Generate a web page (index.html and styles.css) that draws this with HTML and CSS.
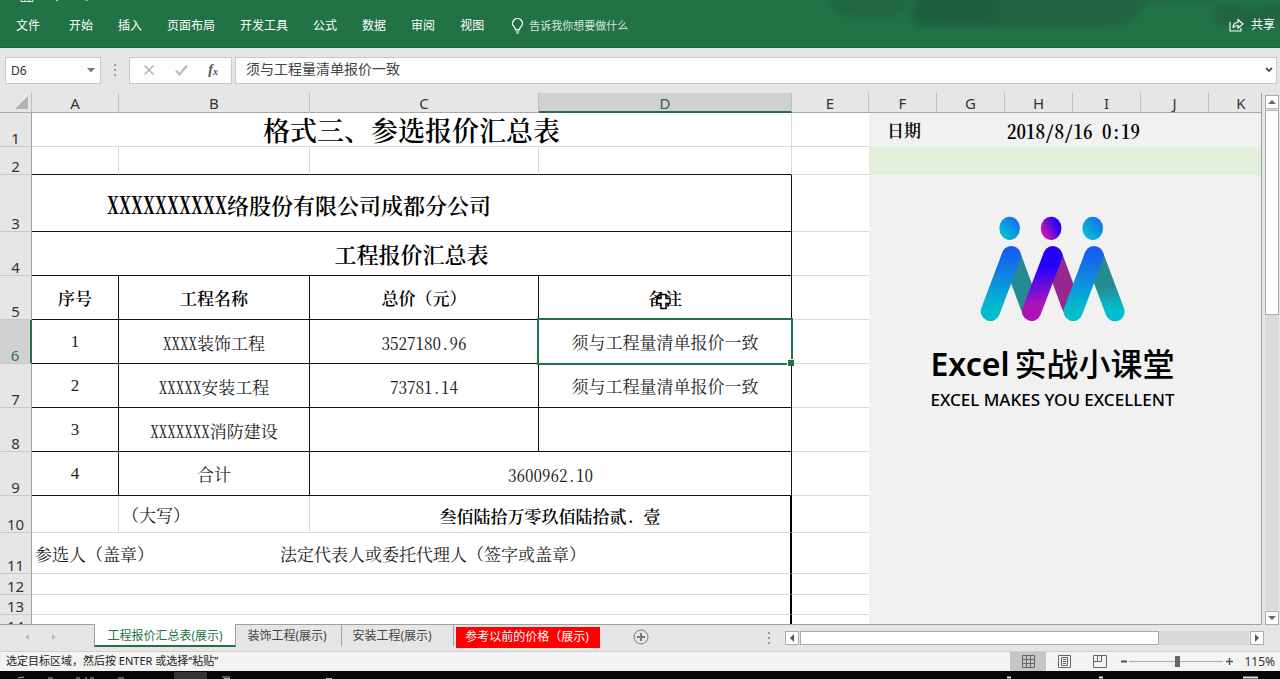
FILE: index.html
```html
<!DOCTYPE html>
<html lang="zh-CN">
<head>
<meta charset="utf-8">
<title>工程报价汇总表</title>
<link rel="stylesheet" href="styles.css">
</head>
<body>
<header class="ribbon">
  <svg class="ribbon-art" width="460" height="34" viewBox="0 0 460 34" aria-hidden="true">
    <defs><filter id="soft" x="-10%" y="-30%" width="120%" height="160%"><feGaussianBlur stdDeviation="3"/></filter></defs>
    <g fill="#1f6040" filter="url(#soft)">
      <path d="M8 -12h80v26l-24 4-50-3z" opacity=".6"/>
      <path d="M90 -12h92l-4 18 4 12-8 9H96l-6-9 4-14z"/>
      <path d="M170 -12h160l-10 26-14 12-90 2-46-2z" opacity=".75"/>
      <path d="M320 -12h80v14l-80 4z" opacity=".5"/>
      <path d="M394 8l14-6 20 8 40-10v22l-40 5-34-2z" opacity=".75"/>
    </g>
  </svg>
  <svg class="quick-access" width="70" height="3" viewBox="0 0 70 3" aria-hidden="true">
    <path d="M1 0v1.500h12V0M5 0v1M9 0v1M36 0l2 1M65 0h3" fill="none" stroke="#e6f0ea"/>
  </svg>
  <nav class="menu">
    <button class="menu-item menu-file">文件</button>
    <button class="menu-item">开始</button>
    <button class="menu-item">插入</button>
    <button class="menu-item">页面布局</button>
    <button class="menu-item">开发工具</button>
    <button class="menu-item">公式</button>
    <button class="menu-item">数据</button>
    <button class="menu-item">审阅</button>
    <button class="menu-item">视图</button>
    <button class="menu-item tell-me">
      <svg width="13" height="16" viewBox="0 0 13 16" fill="none" stroke="#fff" stroke-width="1.200"><path d="M4.500 11.500C4.500 9 1.500 8.500 1.500 5.500a5 5 0 0 1 10 0c0 3-3 3.500-3 6zM4.500 13h4M5 15h3"/></svg>
      <span>告诉我你想要做什么</span>
    </button>
  </nav>
  <button class="menu-item share">
    <svg width="15" height="14" viewBox="0 0 15 14" fill="none" stroke="#fff" stroke-width="1.100"><path d="M1 4v9h11v-3M4 10c0-4 2-5.500 5-5.500V1.500L14 6 9 10V7.500C7 7.500 5 8 4 10z"/></svg>
    <span>共享</span>
  </button>
</header>

<section class="formula-bar">
  <div class="name-box">
    <input class="name-input" aria-label="名称框" value="D6">
    <svg width="8" height="5" viewBox="0 0 8 5"><path d="M0 0h8L4 4.500z" fill="#777"/></svg>
  </div>
  <span class="grip"></span>
  <div class="formula-actions">
    <button aria-label="取消"><svg width="12" height="12" viewBox="0 0 12 12"><path d="M1.500 1.500l9 9M10.500 1.500l-9 9" stroke="#b5b5b5" stroke-width="1.500"/></svg></button>
    <button aria-label="输入"><svg width="13" height="12" viewBox="0 0 13 12"><path d="M1 6.500l3.500 4L12 1.500" fill="none" stroke="#b9b9b9" stroke-width="2"/></svg></button>
    <button class="fx" aria-label="插入函数">f<small>x</small></button>
  </div>
  <div class="formula-box">
    <input class="formula-input" aria-label="编辑栏" value="须与工程量清单报价一致">
    <svg width="8" height="6" viewBox="0 0 8 6"><path d="M1 1l3 3 3-3" fill="none" stroke="#555" stroke-width="1.800"/></svg>
  </div>
</section>

<main class="workspace">
  <div class="sheet-view">
    <table class="sheet">
      <colgroup>
        <col class="w-head"><col class="w-a"><col class="w-b"><col class="w-c"><col class="w-d"><col class="w-e">
        <col class="w-f"><col class="w-f"><col class="w-f"><col class="w-f"><col class="w-f"><col>
      </colgroup>
      <thead>
        <tr>
          <th class="corner"><svg width="13" height="13" viewBox="0 0 13 13"><path d="M13 0v13H0z" fill="#b3b3b3"/></svg></th>
          <th>A</th><th>B</th><th>C</th><th class="col-active">D</th><th>E</th>
          <th>F</th><th>G</th><th>H</th><th>I</th><th>J</th><th class="col-k">K</th>
        </tr>
      </thead>
      <tbody>
        <tr class="r1"><th>1</th><td colspan="4" class="title">格式三、参选报价汇总表</td><td class="plain"></td><td colspan="2" class="panel date-label">日期</td><td colspan="4" class="panel date"><span class="half-date">2018/8/16 0:19</span></td></tr>
        <tr class="r2"><th>2</th><td class="under"></td><td class="under"></td><td class="under"></td><td class="under"></td><td class="plain"></td><td colspan="6" class="band"></td></tr>
        <tr class="r3"><th>3</th><td colspan="4" class="box company"><span class="half-large">XXXXXXXXXX</span>络股份有限公司成都分公司</td><td class="plain"></td>
          <td colspan="6" rowspan="12" class="panel brand">
            <svg class="brand-mark" width="147" height="108" viewBox="240 45 440 325" role="img" aria-label="Excel实战小课堂">
              <defs>
                <linearGradient id="blue" gradientUnits="userSpaceOnUse" x1="0" y1="140" x2="0" y2="365"><stop offset="0" stop-color="#1658fa"/><stop offset=".25" stop-color="#1273e6"/><stop offset=".8" stop-color="#04b9cf"/><stop offset="1" stop-color="#04bfce"/></linearGradient>
                <linearGradient id="violet" gradientUnits="userSpaceOnUse" x1="440" y1="140" x2="470" y2="365"><stop offset=".25" stop-color="#2100ff"/><stop offset=".75" stop-color="#ad14b8"/></linearGradient>
                <linearGradient id="teal" gradientUnits="userSpaceOnUse" x1="0" y1="180" x2="0" y2="365"><stop offset=".2" stop-color="#248c8f"/><stop offset=".45" stop-color="#248c93"/><stop offset=".8" stop-color="#04bdce"/></linearGradient>
                <linearGradient id="headBlue" x1="1" y1="0" x2="0" y2="1"><stop offset=".1" stop-color="#146df0"/><stop offset=".8" stop-color="#07bad2"/></linearGradient>
                <linearGradient id="headViolet" x1="1" y1=".2" x2="0" y2=".8"><stop offset=".2" stop-color="#2602fa"/><stop offset=".8" stop-color="#b914b5"/></linearGradient>
              </defs>
              <g fill="none" stroke-width="58" stroke-linecap="round">
                <path d="M336 168L392 320" stroke="#248b92"/>
                <path d="M461 168L517 320" stroke="#97278f"/>
                <path d="M585 168L648 336" stroke="url(#teal)"/>
                <path d="M336 168L273 335" stroke="url(#blue)"/>
                <path d="M461 168L397 335" stroke="url(#violet)"/>
                <path d="M585 168L522 335" stroke="url(#blue)"/>
              </g>
              <ellipse cx="331" cy="85" rx="31" ry="35" fill="url(#headBlue)"/>
              <ellipse cx="456" cy="85" rx="31" ry="35" fill="url(#headViolet)"/>
              <ellipse cx="581" cy="85" rx="31" ry="35" fill="url(#headBlue)"/>
            </svg>
            <div class="brand-name"><span class="brand-latin">Excel</span><span class="brand-han">实战小课堂</span></div>
            <div class="brand-line">EXCEL MAKES YOU EXCELLENT</div>
          </td></tr>
        <tr class="r4"><th>4</th><td colspan="4" class="box subtitle">工程报价汇总表</td><td class="plain"></td></tr>
        <tr class="r5"><th>5</th><td class="box label">序号</td><td class="box label">工程名称</td><td class="box label">总价（元）</td><td class="box label"><span class="pointed">备注<svg class="pointer" width="15" height="17" viewBox="0 0 15 17"><path d="M5 1.500h5v4h4v5h-4v5H5v-5H1v-5h4z" fill="#fff" stroke="#000" stroke-width="1.500"/></svg></span></td><td class="plain"></td></tr>
        <tr class="r6"><th class="row-active">6</th><td class="box num">1</td><td class="box"><span class="half">XXXX</span>装饰工程</td><td class="box"><span class="half">3527180.96</span></td><td class="box selected">须与工程量清单报价一致<i class="outline"></i></td><td class="plain"></td></tr>
        <tr class="r7"><th>7</th><td class="box num">2</td><td class="box"><span class="half">XXXXX</span>安装工程</td><td class="box"><span class="half">73781.14</span></td><td class="box">须与工程量清单报价一致</td><td class="plain"></td></tr>
        <tr class="r8"><th>8</th><td class="box num">3</td><td class="box"><span class="half">XXXXXXX</span>消防建设</td><td class="box"></td><td class="box"></td><td class="plain"></td></tr>
        <tr class="r9"><th>9</th><td class="box num">4</td><td class="box">合计</td><td colspan="2" class="box"><span class="half">3600962.10</span></td><td class="plain"></td></tr>
        <tr class="r10"><th>10</th><td></td><td class="left">（大写）</td><td colspan="2" class="label edge">叁佰陆拾万零玖佰陆拾贰<span class="half">. </span>壹</td><td class="plain"></td></tr>
        <tr class="r11"><th>11</th><td colspan="4" class="left edge"><div class="signers"><span class="signer">参选人（盖章）</span><span>法定代表人或委托代理人（签字或盖章）</span></div></td><td class="plain"></td></tr>
        <tr class="r12"><th>12</th><td colspan="4" class="edge"></td><td class="plain"></td></tr>
        <tr class="r13"><th>13</th><td colspan="4" class="edge"></td><td class="plain"></td></tr>
        <tr class="r14"><th>14</th><td colspan="4" class="edge"></td><td class="plain"></td></tr>
      </tbody>
    </table>
  </div>
  <div class="scroll-y">
    <button aria-label="向上滚动"><svg width="8" height="4" viewBox="0 0 8 4"><path d="M0 4h8L4 0z" fill="#666"/></svg></button>
    <div class="track-y"><div class="thumb-y"></div></div>
    <button aria-label="向下滚动"><svg width="8" height="4" viewBox="0 0 8 4"><path d="M0 0h8L4 4z" fill="#666"/></svg></button>
  </div>
</main>

<div class="tab-bar">
  <div class="tab-nav">
    <button aria-label="上一张"><svg width="4" height="6" viewBox="0 0 4 6"><path d="M4 0v6L0 3z" fill="#bbb"/></svg></button>
    <button aria-label="下一张"><svg width="4" height="6" viewBox="0 0 4 6"><path d="M0 0v6l4-3z" fill="#bbb"/></svg></button>
  </div>
  <button class="tab tab-current">工程报价汇总表(展示)</button>
  <button class="tab tab-second">装饰工程(展示)</button>
  <button class="tab tab-third">安装工程(展示)</button>
  <button class="tab tab-red">参考以前的价格（展示)</button>
  <button class="tab-add" aria-label="新工作表"><svg width="16" height="16" viewBox="0 0 16 16" fill="none" stroke="#777"><circle cx="8" cy="8" r="7"/><path d="M4 8h8M8 4v8" stroke-width="2"/></svg></button>
  <span class="grip tab-grip"></span>
  <div class="scroll-x">
    <button aria-label="向左滚动"><svg width="4" height="8" viewBox="0 0 4 8"><path d="M4 0v8L0 4z" fill="#555"/></svg></button>
    <div class="track-x"><div class="thumb-x"></div></div>
    <button aria-label="向右滚动"><svg width="4" height="8" viewBox="0 0 4 8"><path d="M0 0v8l4-4z" fill="#555"/></svg></button>
  </div>
</div>

<footer class="status">
  <span class="status-text">选定目标区域，然后按 ENTER 或选择“粘贴”</span>
  <button class="view view-on" aria-label="普通"><svg width="13" height="13" viewBox="0 0 13 13" fill="none" stroke="#666"><path d="M.5.5h12v12H.5zM.5 4.500h12M.5 8.500h12M4.500.5v12M8.500.5v12"/></svg></button>
  <button class="view" aria-label="页面布局"><svg width="13" height="13" viewBox="0 0 13 13" fill="none" stroke="#666"><path d="M.5.5h12v12H.5zM3.500 2.500h6v8h-6zM5 4.500h3M5 6.500h3M5 8.500h3"/></svg></button>
  <button class="view" aria-label="分页预览"><svg width="14" height="13" viewBox="0 0 14 13" fill="none" stroke="#666"><path d="M.5.5h13v12H.5zM4.500.5v6M8.500.5v6M.5 6.500h8"/></svg></button>
  <button class="zoom-step" aria-label="缩小"><svg width="7" height="7" viewBox="0 0 7 7"><path d="M0 3.500h6" stroke="#555" stroke-width="2"/></svg></button>
  <input class="zoom" type="range" min="0" max="100" value="52" aria-label="显示比例">
  <button class="zoom-step" aria-label="放大"><svg width="7" height="7" viewBox="0 0 7 7"><path d="M0 3.500h7M3.500 0v7" stroke="#555" stroke-width="1.500"/></svg></button>
  <span class="zoom-value">115%</span>
</footer>
<div class="taskbar">
  <span class="task-active"></span>
  <svg class="task-icons" width="340" height="3" viewBox="0 0 340 3" aria-hidden="true"><path d="M18 2l6-1M48 2h5M76 2h4M86 1v2M90 2h4M118 2h6M222 1h8M224 2.500h6M326 2.500h6" stroke="#aaa"/></svg>
  <svg class="task-tray" width="280" height="3" viewBox="0 0 280 3" aria-hidden="true"><path d="M7 1.500h4M99 1.500h4M243 1.500h15" stroke="#ddd" stroke-width="2"/></svg>
</div>
</body>
</html>
```
FILE: styles.css
```css
* { box-sizing: border-box; }
body {
  margin: 0;
  height: 100vh;
  display: flex;
  flex-direction: column;
  overflow: hidden;
  background: #e6e6e6;
  font-family: "Noto Sans", "Noto Sans CJK SC", sans-serif;
  font-size: 12px;
  line-height: 1;
  color: #333;
}
button, input { font: inherit; color: inherit; margin: 0; padding: 0; border: 0; background: none; }
button { display: flex; align-items: center; justify-content: center; white-space: nowrap; }
svg { display: block; flex: none; }

.ribbon {
  position: relative;
  flex: none;
  height: 48px;
  padding: 0 5px 0 16px;
  display: flex;
  align-items: center;
  justify-content: space-between;
  background: #217346;
  border-bottom: 1px solid #1b5e3a;
  color: #fff;
}
.ribbon-art { position: absolute; right: 0; top: 0; }
.quick-access { position: absolute; left: 20px; top: 0; }
.menu { display: flex; gap: 25px; padding-top: 4px; }
.menu-file { margin-right: 4px; }
.tell-me { gap: 5px; margin-left: 2px; font-size: 11px; color: #d6e8dd; }
.share { gap: 7px; padding-top: 2px; position: relative; }

.formula-bar { flex: none; display: flex; align-items: center; height: 45px; padding: 0 3px 1px 5px; }
.name-box, .formula-actions, .formula-box {
  height: 27px;
  display: flex;
  align-items: center;
  background: #fdfdfd;
  border: 1px solid #c8c8c8;
}
.name-box { width: 96px; padding: 0 5px; }
.name-input { flex: 1; min-width: 0; }
.grip { width: 2px; height: 12px; margin: 0 13px; background: repeating-linear-gradient(#999 0 2px, transparent 2px 5px); }
.formula-actions { width: 103px; justify-content: space-around; padding: 0 3px; }
.fx { font: italic bold 14px "Liberation Serif", serif; color: #555; }
.fx small { font-size: 10px; padding-top: 3px; }
.formula-box { flex: 1; margin-left: 3px; padding: 0 3px 0 10px; }
.formula-input { flex: 1; min-width: 0; height: 25px; padding-bottom: 4px; font-size: 14px; color: #444; }

.workspace { flex: 1; min-height: 0; display: flex; }
.sheet-view { flex: 1; min-width: 0; overflow: hidden; border-right: 1px solid #a0a0a0; border-bottom: 1px solid #a0a0a0; }
.sheet {
  width: 100%;
  table-layout: fixed;
  border-collapse: separate;
  border-spacing: 0;
  background: #fff;
}
.w-head { width: 32px; }
.w-a { width: 87px; }
.w-b { width: 191px; }
.w-c { width: 229px; }
.w-d { width: 253px; }
.w-e { width: 77px; }
.w-f { width: 68px; }
.sheet th { padding: 0; background: #e6e6e6; font-size: 15px; font-weight: 400; color: #333; }
.sheet thead th { height: 20px; border-right: 1px solid #bdbdbd; border-bottom: 1px solid #a8a8a8; padding-top: 2px; }
.sheet thead .corner { padding: 0 3px 1px 0; }
.corner svg { margin-left: auto; }
.sheet thead .col-k { border-right: 0; padding-left: 12px; }
.sheet thead .col-active { background: #d0d1d1; border-bottom: 2px solid #217346; color: #3b5e4b; }
.sheet tbody th { vertical-align: bottom; border-right: 1px solid #a0a0a0; border-bottom: 1px solid #c8c8c8; }
.sheet tbody .row-active { background: #d0d1d1; border-right: 2px solid #217346; color: #3b6e52; }
.sheet td {
  padding: 4px 0 0;
  text-align: center;
  vertical-align: middle;
  border-right: 1px solid #d9d9d9;
  border-bottom: 1px solid #d9d9d9;
  font-family: "Liberation Serif", "Noto Serif CJK SC", "Noto Sans CJK SC", serif;
  font-size: 17px;
  color: #222;
  white-space: nowrap;
}
.sheet td.plain { border-right: 0; }
.sheet td.under { border-bottom-color: #111; }
.sheet td.box { border-right-color: #111; border-bottom-color: #111; }
.sheet td.edge { border-right: 2px solid #000; }
.sheet td.left { text-align: left; padding-left: 3px; }
.sheet td.label { font-weight: 600; color: #000; }
.sheet td.title { font-size: 27px; font-weight: 600; color: #000; padding-top: 6px; }
.sheet td.subtitle { font-size: 22px; font-weight: 600; color: #000; }
.sheet td.company { font-size: 22px; font-weight: 600; color: #000; text-align: left; padding-left: 75px; }
.sheet td.num { padding: 0; }
.half, .half-date, .half-large {
  font-family: "Noto Serif CJK SC", "Liberation Mono", monospace;
  font-feature-settings: "hwid";
  white-space: pre;
}
.half-date { font-size: 19px; }
.half-large { font-size: 24px; }
.sheet td.panel { background: #f1f1f1; border: 0; color: #000; }
.sheet td.date-label { font-weight: 600; text-align: left; padding: 2px 0 0 18px; }
.sheet td.date { font-weight: 600; text-align: left; padding: 2px 0 0 2px; }
.sheet td.band { background: #e2efda; border: 0; }
.sheet td.brand { vertical-align: top; padding: 40px 25px 0 0; font-family: "Noto Sans", "Noto Sans CJK SC", sans-serif; }
.brand-mark { margin: 0 auto; }
.brand-name { display: flex; align-items: center; justify-content: center; gap: 5px; margin-top: 25px; color: #000; }
.brand-latin { font-size: 32px; font-weight: 600; }
.brand-han { font-size: 32px; font-weight: 500; }
.brand-line { margin-top: 11px; font-size: 17px; font-weight: 500; color: #000; }
.signers { display: flex; }
.signer { width: 245px; }
.pointed { position: relative; }
.pointer { position: absolute; left: 8px; top: 3px; }
.selected { position: relative; }
.outline { position: absolute; inset: -2px -2px -2px -2px; border: 2px solid #217346; }
.outline::after { content: ""; position: absolute; right: -3px; bottom: -3px; width: 6px; height: 6px; background: #217346; border: 1px solid #fff; border-right: 0; border-bottom: 0; }

.r1 { height: 34px; }
.r2 { height: 28px; }
.r3 { height: 57px; }
.r4, .r5, .r6, .r7, .r8, .r9 { height: 44px; }
.r10 { height: 37px; }
.r11 { height: 41px; }
.r12 { height: 21px; }
.r13, .r14 { height: 20px; }

.scroll-y { width: 18px; padding: 2px 1px 0 3px; display: flex; flex-direction: column; gap: 1px; }
.scroll-y button { height: 14px; background: #fff; border: 1px solid #ababab; }
.track-y { flex: 1; background: #dadada; }
.thumb-y { height: 41%; background: #fff; border: 1px solid #ababab; }

.tab-bar { flex: none; height: 27px; display: flex; align-items: flex-start; padding-right: 16px; border-bottom: 1px solid #cfcfcf; color: #444; }
.tab-nav { width: 94px; height: 24px; display: flex; padding-left: 25px; gap: 23px; }
.tab { height: 21px; padding-top: 1px; }
.tab-current { width: 142px; height: 23px; margin-top: -1px; padding-top: 3px; background: #fff; border-bottom: 2px solid #217346; border-left: 1px solid #a0a0a0; border-right: 1px solid #a0a0a0; color: #217346; }
.tab-second { width: 106px; padding-right: 3px; border-right: 1px solid #a0a0a0; }
.tab-third { width: 112px; padding-right: 11px; border-right: 1px solid #a0a0a0; }
.tab-red { width: 144px; margin: 2px 0 0 2px; padding: 0 2px 2px 0; background: #f00; color: #fff; }
.tab-add { width: 16px; height: 24px; margin-left: 33px; }
.tab-grip { margin: 7px 15px 0 auto; }
.scroll-x { width: 479px; height: 14px; margin-top: 6px; display: flex; gap: 1px; }
.scroll-x button { width: 14px; background: #fff; border: 1px solid #ababab; }
.track-x { flex: 1; background: #dadada; }
.thumb-x { width: 80%; height: 100%; background: #fff; border: 1px solid #ababab; }

.status { flex: none; height: 19px; display: flex; align-items: center; padding: 0 5px 0 6px; background: #f3f3f3; }
.status-text { flex: 1; font-size: 11px; padding-bottom: 2px; color: #222; }
.view { width: 36px; height: 19px; }
.view-on { background: #c6c6c6; }
.zoom-step { width: 9px; height: 19px; margin-left: 2px; }
.zoom { -webkit-appearance: none; appearance: none; width: 94px; height: 12px; background: linear-gradient(#aaa, #aaa) center / 100% 1px no-repeat; }
.zoom::-webkit-slider-thumb { -webkit-appearance: none; width: 5px; height: 11px; background: #666; }
.zoom-value { width: 41px; text-align: right; }

.taskbar { position: relative; flex: none; height: 8px; background: #060606; display: flex; justify-content: space-between; align-items: flex-end; }
.task-active { position: absolute; left: 174px; top: 1px; width: 33px; height: 7px; background: #333; }
.task-icons { position: relative; }
```
